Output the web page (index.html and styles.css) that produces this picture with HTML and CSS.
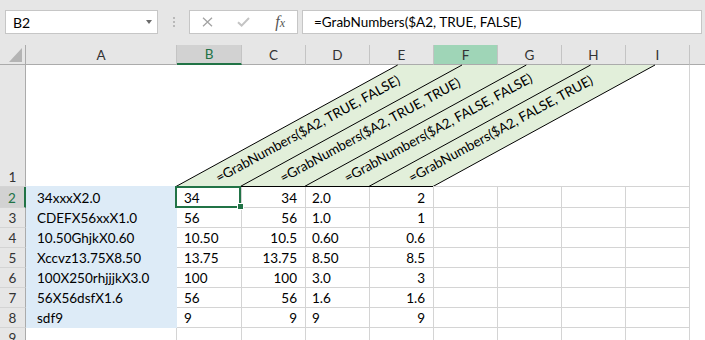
FILE: index.html
```html
<!DOCTYPE html>
<html>
<head>
<meta charset="utf-8">
<link rel="stylesheet" href="styles.css">
</head>
<body>
<div class="app">
  <div class="fbar">
    <div class="namebox"><span class="nb-text">B2</span><span class="caret"></span></div>
    <div class="grip"><i></i><i></i><i></i></div>
    <div class="fbtns">
      <span class="btn"><svg width="11" height="10" viewBox="0 0 11 10"><path d="M1 0.8 L10 9.2 M10 0.8 L1 9.2" stroke="#a3a3a3" stroke-width="1.3" fill="none"/></svg></span>
      <span class="btn"><svg width="13" height="10" viewBox="0 0 13 10"><path d="M1 5.2 L4.6 8.6 L12 1" stroke="#c4c4c4" stroke-width="2" fill="none"/></svg></span>
      <span class="btn fx"><i class="fx-f">f</i><i class="fx-x">x</i></span>
    </div>
    <div class="finput">=GrabNumbers($A2, TRUE, FALSE)</div>
  </div>

  <div class="sheet">
    <!-- header row -->
    <div class="c h corner"><svg width="13" height="14" viewBox="0 0 13 14"><polygon points="0,14 13,0 13,14" fill="#b4b4b4"/></svg></div>
    <div class="c h">A</div>
    <div class="c h hsel">B</div>
    <div class="c h">C</div>
    <div class="c h">D</div>
    <div class="c h">E</div>
    <div class="c h hf">F</div>
    <div class="c h">G</div>
    <div class="c h">H</div>
    <div class="c h">I</div>
    <div class="c h hlast"></div>

    <!-- row 1 -->
    <div class="c rh rh1">1</div>
    <div class="c a1"></div>
    <div class="c diag">
      <svg class="diag-svg" width="512" height="122" viewBox="177 65 512 122">
        <polygon points="176,186.5 397.7,65 655,65 433,186.5" fill="#e2efda"/>
        <g stroke="#000" stroke-width="1" fill="none">
          <line x1="176" y1="186.5" x2="397.7" y2="65"/>
          <line x1="240.3" y1="186.5" x2="462" y2="65"/>
          <line x1="304.5" y1="186.5" x2="526.3" y2="65"/>
          <line x1="368.8" y1="186.5" x2="590.6" y2="65"/>
          <line x1="433" y1="186.5" x2="655" y2="65"/>
          <line x1="176" y1="186.5" x2="433" y2="186.5"/>
        </g>
        <line x1="433" y1="186.5" x2="689" y2="186.5" stroke="#d4d4d4" stroke-width="1"/>
        <g class="dtext">
          <text x="218.9" y="182.7" transform="rotate(-28.6 218.9 182.7)">=GrabNumbers($A2, TRUE, FALSE)</text>
          <text x="283.2" y="182.7" transform="rotate(-28.6 283.2 182.7)">=GrabNumbers($A2, TRUE, TRUE)</text>
          <text x="347.5" y="182.7" transform="rotate(-28.6 347.5 182.7)">=GrabNumbers($A2, FALSE, FALSE)</text>
          <text x="411.8" y="182.7" transform="rotate(-28.6 411.8 182.7)">=GrabNumbers($A2, FALSE, TRUE)</text>
        </g>
      </svg>
    </div>
    <div class="c blank"></div>

    <!-- row 2 -->
    <div class="c rh rsel">2</div>
    <div class="c a">34xxxX2.0</div>
    <div class="c b cur">34<span class="sel"><span class="handle"></span></span></div>
    <div class="c r">34</div>
    <div class="c d">2.0</div>
    <div class="c r">2</div>
    <div class="c"></div><div class="c"></div><div class="c"></div><div class="c"></div>
    <div class="c blank"></div>

    <!-- row 3 -->
    <div class="c rh">3</div>
    <div class="c a">CDEFX56xxX1.0</div>
    <div class="c b">56</div>
    <div class="c r">56</div>
    <div class="c d">1.0</div>
    <div class="c r">1</div>
    <div class="c"></div><div class="c"></div><div class="c"></div><div class="c"></div>
    <div class="c blank"></div>

    <!-- row 4 -->
    <div class="c rh">4</div>
    <div class="c a">10.50GhjkX0.60</div>
    <div class="c b">10.50</div>
    <div class="c r">10.5</div>
    <div class="c d">0.60</div>
    <div class="c r">0.6</div>
    <div class="c"></div><div class="c"></div><div class="c"></div><div class="c"></div>
    <div class="c blank"></div>

    <!-- row 5 -->
    <div class="c rh">5</div>
    <div class="c a">Xccvz13.75X8.50</div>
    <div class="c b">13.75</div>
    <div class="c r">13.75</div>
    <div class="c d">8.50</div>
    <div class="c r">8.5</div>
    <div class="c"></div><div class="c"></div><div class="c"></div><div class="c"></div>
    <div class="c blank"></div>

    <!-- row 6 -->
    <div class="c rh">6</div>
    <div class="c a">100X250rhjjjkX3.0</div>
    <div class="c b">100</div>
    <div class="c r">100</div>
    <div class="c d">3.0</div>
    <div class="c r">3</div>
    <div class="c"></div><div class="c"></div><div class="c"></div><div class="c"></div>
    <div class="c blank"></div>

    <!-- row 7 -->
    <div class="c rh">7</div>
    <div class="c a">56X56dsfX1.6</div>
    <div class="c b">56</div>
    <div class="c r">56</div>
    <div class="c d">1.6</div>
    <div class="c r">1.6</div>
    <div class="c"></div><div class="c"></div><div class="c"></div><div class="c"></div>
    <div class="c blank"></div>

    <!-- row 8 -->
    <div class="c rh">8</div>
    <div class="c a">sdf9</div>
    <div class="c b">9</div>
    <div class="c r">9</div>
    <div class="c d">9</div>
    <div class="c r">9</div>
    <div class="c"></div><div class="c"></div><div class="c"></div><div class="c"></div>
    <div class="c blank"></div>

    <!-- row 9 -->
    <div class="c rh">9</div>
    <div class="c"></div>
    <div class="c"></div><div class="c"></div><div class="c"></div><div class="c"></div>
    <div class="c"></div><div class="c"></div><div class="c"></div><div class="c"></div>
    <div class="c blank"></div>
  </div>
</div>
</body>
</html>
```
FILE: styles.css
```css
* { box-sizing: border-box; margin: 0; padding: 0; }
html, body { width: 705px; height: 340px; overflow: hidden; background: #fff; }
body {
  font-family: Lato, "Open Sans", sans-serif;
  font-size: 13.5px;
  color: #000;
}
.app { width: 705px; height: 340px; overflow: hidden; }

/* formula bar */
.fbar {
  height: 45px;
  background: #e6e6e6;
  display: flex;
  align-items: flex-start;
  padding-top: 10px;
}
.namebox {
  margin-left: 5px;
  width: 153px;
  height: 24px;
  background: #fff;
  border: 1px solid #c6c6c6;
  display: flex;
  align-items: center;
  padding-left: 7px;
  font-size: 14px;
}
.caret {
  margin-left: auto;
  margin-right: 5px;
  width: 0; height: 0;
  border-left: 3.5px solid transparent;
  border-right: 3.5px solid transparent;
  border-top: 4px solid #6a6a6a;
}
.grip {
  width: 31px;
  display: flex;
  flex-direction: column;
  align-items: center;
  gap: 2px;
  padding-top: 7px;
}
.grip i { display: block; width: 2px; height: 2px; background: #b9b9b9; }
.fbtns {
  width: 109px;
  height: 24px;
  background: #fff;
  border: 1px solid #c6c6c6;
  display: grid;
  grid-template-columns: repeat(3, 1fr);
  align-items: center;
}
.btn { display: flex; justify-content: center; align-items: center; }
.btn svg { display: block; }
.fx { font-family: "Liberation Serif", serif; color: #555; font-style: italic; padding-left: 2px; }
.fx-f { font-size: 16px; }
.fx-x { font-size: 12px; margin-left: 0px; position: relative; top: 1px; }
.finput {
  margin-left: 4px;
  width: 400px;
  height: 24px;
  background: #fff;
  border: 1px solid #c6c6c6;
  display: flex;
  align-items: center;
  padding-left: 11px;
  font-size: 13.5px;
}

/* sheet grid */
.sheet {
  display: grid;
  grid-template-columns: 26px 151px 65px repeat(7, 64px) 1fr;
  grid-template-rows: 20px 122px 21px repeat(6, 20px) 20px;
}
.c {
  border-right: 1px solid #d4d4d4;
  border-bottom: 1px solid #d4d4d4;
  display: flex;
  align-items: center;
  white-space: nowrap;
  overflow: hidden;
  padding: 1px 6px 0;
}
.h {
  background: #e6e6e6;
  border-right-color: #c4c4c4;
  border-bottom-color: #ababab;
  justify-content: center;
  color: #333;
  padding: 0;
}
.corner {
  justify-content: flex-end;
  align-items: flex-end;
  padding: 0 3px 2px 0;
  border-right-color: #ababab;
}
.corner svg { display: block; }
.hsel {
  background: #d2d2d2;
  color: #217346;
  border-bottom: 2px solid #217346;
}
.hf { background: #9fd5b7; }
.hlast { border-right: none; }

.rh {
  background: #e6e6e6;
  border-right-color: #ababab;
  border-bottom-color: #d4d4d4;
  justify-content: center;
  color: #333;
  padding: 1px 0 0;
}
.rh1 { align-items: flex-end; padding-bottom: 1px; }
.rsel {
  background: #d2d2d2;
  color: #217346;
  border-right: 2px solid #217346;
}

.a1 { border-right: none; border-bottom-color: #ddebf7; }
.diag {
  grid-column: span 8;
  padding: 0;
  border-bottom: none;
  overflow: visible;
  align-items: flex-start;
}
.diag-svg { display: block; overflow: visible; }
.dtext text {
  font-family: Lato, "Open Sans", sans-serif;
  font-size: 13.5px;
  fill: #000;
}
.blank { border: none; }

.a {
  background: #ddebf7;
  border-right-color: #ddebf7;
  border-bottom-color: #ddebf7;
  padding-left: 11px;
}
.b { padding-left: 7px; }
.d { padding-left: 6px; }
.r { justify-content: flex-end; padding-right: 8px; }

.cur { position: relative; overflow: visible; }
.sel {
  position: absolute;
  left: -2px;
  top: -1px;
  right: 0;
  bottom: -1px;
  border: 2px solid #217346;
}
.handle {
  position: absolute;
  right: -4px;
  bottom: -3px;
  width: 5px;
  height: 5px;
  background: #217346;
  box-shadow: 0 0 0 1px #fff;
}
```
